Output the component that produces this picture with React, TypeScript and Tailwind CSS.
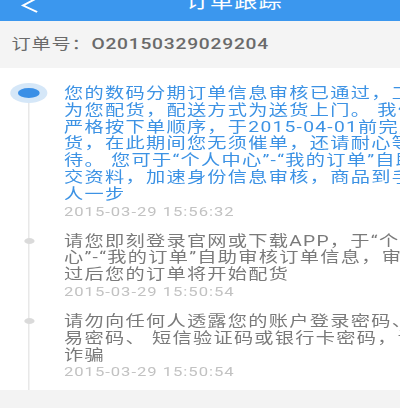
import React from "react";

const font = "font-['Roboto','Noto_Sans_CJK_SC',sans-serif]";

type Item = { lines: string[]; date: string; active?: boolean };

const items: Item[] = [
  {
    active: true,
    lines: [
      "您的数码分期订单信息审核已通过，工作人",
      "为您配货，配送方式为送货上门。 我们将",
      "严格按下单顺序，于2015-04-01前完成配",
      "货，在此期间您无须催单，还请耐心等",
      "待。 您可于“个人中心”-“我的订单”自助提",
      "交资料，加速身份信息审核，商品到手快",
      "人一步",
    ],
    date: "2015-03-29 15:56:32",
  },
  {
    lines: [
      "请您即刻登录官网或下载APP，于“个人中",
      "心”-“我的订单”自助审核订单信息，审核通",
      "过后您的订单将开始配货",
    ],
    date: "2015-03-29 15:50:54",
  },
  {
    lines: [
      "请勿向任何人透露您的账户登录密码、交",
      "易密码、 短信验证码或银行卡密码，谨防",
      "诈骗",
    ],
    date: "2015-03-29 15:50:54",
  },
];

function Dot({ active }: { active?: boolean }) {
  if (active) {
    return (
      <div className="ml-[8px] flex h-[20px] w-[29px] items-center justify-center rounded-[50%] bg-[#d5e7f8]">
        <div className="h-[10px] w-[17px] rounded-[50%] bg-[#3a8fe6]" />
      </div>
    );
  }
  return <div className="ml-[19px] h-[6px] w-[8px] rounded-[50%] bg-[#dadada]" />;
}

export default function App() {
  return (
    <div className={`h-[408px] w-[400px] overflow-hidden bg-white ${font}`}>
      <div className="h-[408px] w-[312.5px] origin-top-left scale-x-[1.28]">
        {/* header */}
        <div className="flex h-[21px] items-start overflow-hidden bg-[#3b97ee]">
          <svg width="34" height="21" viewBox="0 0 34 21" className="shrink-0">
            <polyline
              points="29,-2 18,5.5 29,12"
              fill="none"
              stroke="#ffffff"
              strokeWidth="1.8"
            />
          </svg>
          <div className="ml-[111px] mt-[-8px] whitespace-nowrap text-[18px] leading-[20px] tracking-[1px] text-white">
            订单跟踪
          </div>
        </div>

        {/* order number */}
        <div className="flex h-[47px] items-center whitespace-nowrap bg-[#f4f4f4] pl-[9px] text-[15px] tracking-[0.6px] text-[#6a6a6a]">
          <span>订单号：</span>
          <span className="font-medium">O20150329029204</span>
        </div>

        {/* timeline */}
        <div className="relative h-[322px] overflow-hidden pt-[17px]">
          <div className="absolute bottom-0 left-[22px] top-[25px] w-px bg-[#e4e4e4]" />
          <div className="relative flex flex-col gap-[12px]">
            {items.map((it, i) => (
              <div key={i} className="flex">
                <div className="w-[50px] shrink-0">
                  <div className="flex h-[16.8px] items-center">
                    <Dot active={it.active} />
                  </div>
                </div>
                <div className="min-w-0 whitespace-nowrap">
                  {it.lines.map((l, j) => (
                    <div
                      key={j}
                      className={`text-[15px] leading-[16.8px] tracking-[1px] ${
                        it.active ? "text-[#3c92e4]" : "text-[#7a7a7a]"
                      }`}
                    >
                      {l}
                    </div>
                  ))}
                  <div className="text-[13px] leading-[18px] tracking-[0.75px] text-[#c2c2c2]">
                    {it.date}
                  </div>
                </div>
              </div>
            ))}
          </div>
        </div>

        <div className="h-[18px] bg-[#f3f3f3]" />
      </div>
    </div>
  );
}
